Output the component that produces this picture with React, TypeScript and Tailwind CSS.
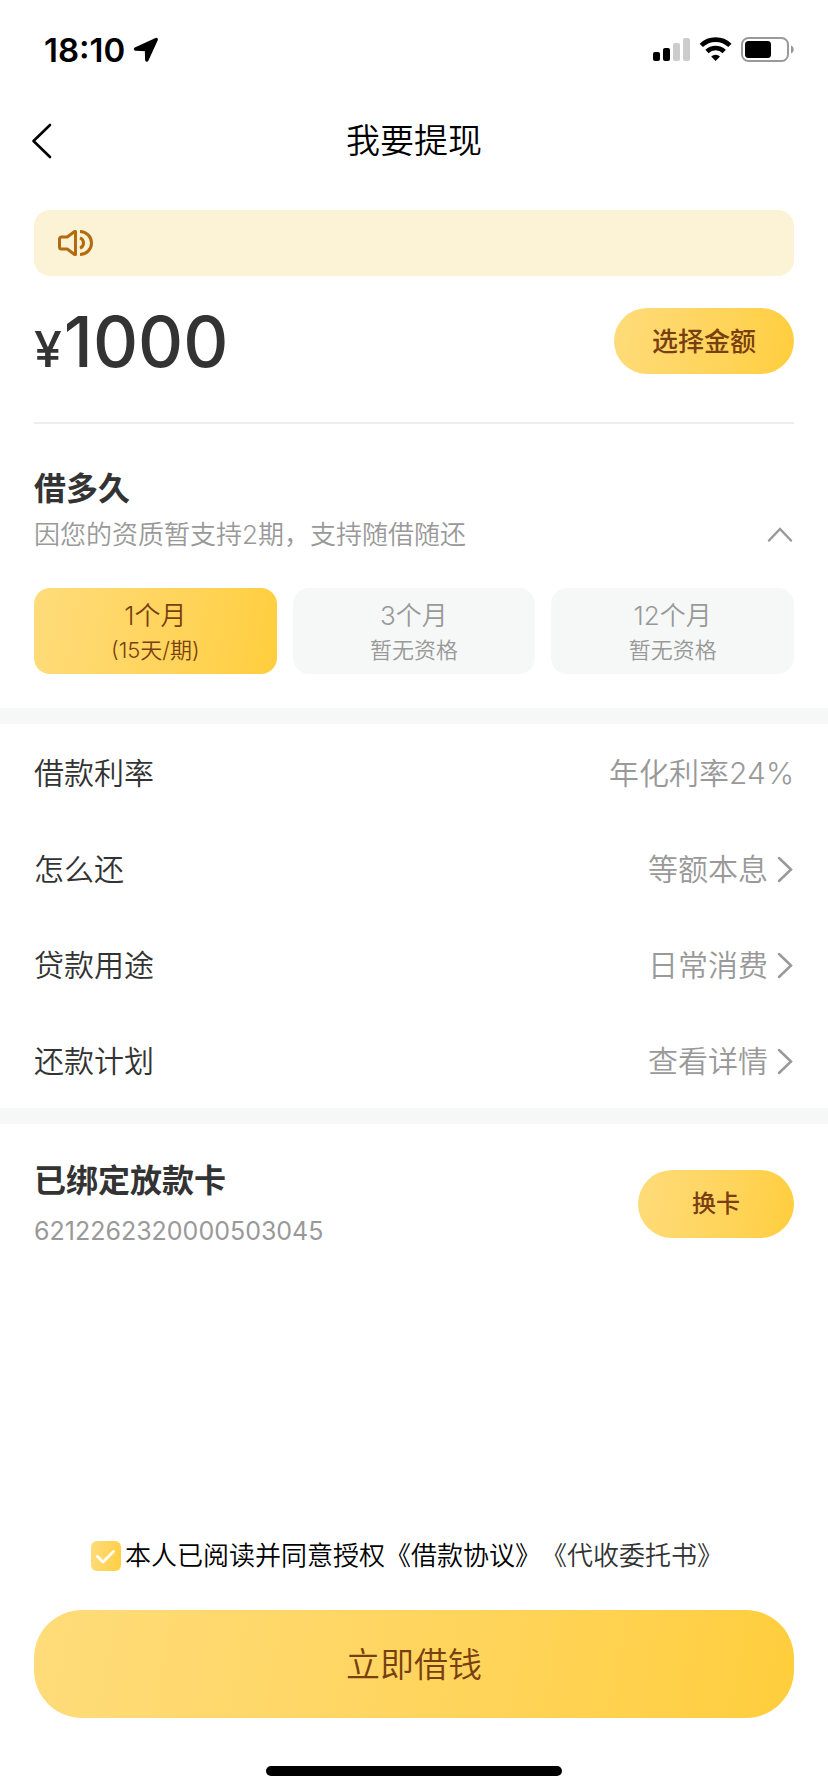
import { useState } from 'react'

type Term = { id: string; title: string; note: string; available: boolean }
type Detail = { label: string; value: string; link: boolean }

const TERMS: Term[] = [
  { id: '1', title: '1个月', note: '(15天/期)', available: true },
  { id: '3', title: '3个月', note: '暂无资格', available: false },
  { id: '12', title: '12个月', note: '暂无资格', available: false },
]

const DETAILS: Detail[] = [
  { label: '借款利率', value: '年化利率24%', link: false },
  { label: '怎么还', value: '等额本息', link: true },
  { label: '贷款用途', value: '日常消费', link: true },
  { label: '还款计划', value: '查看详情', link: true },
]

function StatusBar() {
  return (
    <div className="flex h-[100px] items-center justify-between pl-11 pr-[34px]">
      <div className="flex items-center gap-2">
        <span className="text-[33px] leading-10 font-semibold">18:10</span>
        <svg width="26" height="26" viewBox="0 0 26 26" aria-hidden="true">
          <path d="M2.5 12 23.2 2.5 13.8 23 13.5 12.6Z" stroke="#000" strokeWidth="3.4" strokeLinejoin="round" />
        </svg>
      </div>
      <svg width="142" height="26" viewBox="0 0 142 26" aria-hidden="true">
        <rect x="1" y="15" width="7" height="9" rx="2" />
        <rect x="11" y="11" width="7" height="13" rx="2" />
        <rect x="21" y="6" width="7" height="18" rx="2" fill="#ccc" />
        <rect x="31" y="1" width="7" height="23" rx="2" fill="#ccc" />
        <g fill="none" stroke="#000" strokeWidth="4.6">
          <path d="M49.3 8.4a20.5 20.5 0 0 1 28.6 0" />
          <path d="M55 14.5a12.5 12.5 0 0 1 17.2 0" />
        </g>
        <path d="M59.2 19.6a6.4 6.4 0 0 1 8.8 0L63.6 24Z" />
        <rect x="90" y="1" width="46" height="23" rx="6.5" fill="none" stroke="#999" strokeWidth="2" />
        <rect x="93" y="4" width="26" height="17" rx="3.5" />
        <path d="M139 8.5c3.6 1.2 3.6 6.8 0 8Z" fill="#999" />
      </svg>
    </div>
  )
}

function SpeakerIcon() {
  return (
    <svg width="36" height="28" viewBox="0 0 36 28" fill="none" stroke="#b36b10" strokeWidth="3" aria-hidden="true">
      <path d="M17.6 2.5h.9v23h-.9L10.2 20H4.5a2 2 0 0 1-2-2v-8a2 2 0 0 1 2-2h5.7Z" strokeLinejoin="round" />
      <path d="M23 2.5a11.5 11.5 0 0 1 0 23" />
      <path d="M23 8.8a5.6 5.6 0 0 1 0 10.4" />
    </svg>
  )
}

export default function App() {
  const [term, setTerm] = useState('1')
  const [agreed, setAgreed] = useState(true)

  return (
    <div className="flex min-h-screen flex-col bg-white font-['Inter','Noto_Sans_CJK_SC',sans-serif] font-[350] text-black">
      <StatusBar />

      <header className="grid h-20 grid-cols-[1fr_auto_1fr] items-center px-[30px] pt-0.5">
        <button type="button" aria-label="返回">
          <svg width="24" height="36" viewBox="0 0 24 36" fill="none" stroke="#000" strokeWidth="2.6" strokeLinecap="round" strokeLinejoin="round">
            <path d="M20 2 3.5 18 20 34" />
          </svg>
        </button>
        <h1 className="text-[34px] leading-12 font-[350]">我要提现</h1>
      </header>

      <main className="pt-[30px]">
        <div className="mx-[34px] flex h-[66px] items-center rounded-2xl bg-[#fcf2d6] pl-[23px]">
          <SpeakerIcon />
        </div>

        <section className="mx-[34px] mt-8 flex h-[116px] items-start justify-between border-b-2 border-[#eee]">
          <p className="text-[70px] leading-[68px] font-medium text-[#333]">
            <span className="mr-0.5 text-[50px]">¥</span>1000
          </p>
          <button
            type="button"
            className="h-[66px] w-[180px] rounded-full bg-linear-100 from-[#ffdc7a] to-[#ffce3c] text-[26px] font-medium text-[#7a3f10]"
          >
            选择金额
          </button>
        </section>

        <section className="px-[34px] pt-[41px] pb-[34px]">
          <h2 className="text-[32px] leading-12 font-bold text-[#333]">借多久</h2>
          <div className="flex h-11 items-center justify-between text-[#999]">
            <p className="text-[26px] leading-11">因您的资质暂支持2期，支持随借随还</p>
            <button type="button" aria-label="收起">
              <svg width="28" height="18" viewBox="0 0 28 18" fill="none" stroke="currentColor" strokeWidth="2.5" strokeLinecap="round">
                <path d="M3 14.5 14 3l11 11.5" />
              </svg>
            </button>
          </div>
          <div className="mt-[31px] grid grid-cols-3 gap-4">
            {TERMS.map(t => (
              <button
                key={t.id}
                type="button"
                disabled={!t.available}
                aria-pressed={term === t.id}
                onClick={() => setTerm(t.id)}
                className={`flex h-[86px] flex-col items-center justify-center rounded-2xl pt-0.5 ${
                  term === t.id
                    ? 'bg-linear-100 from-[#ffdc7a] to-[#ffce3c] text-[#7a3f10]'
                    : 'bg-[#f6f8f7] text-[#999]'
                }`}
              >
                <span className="text-[26px] leading-9">{t.title}</span>
                <span className="text-[22px] leading-8">{t.note}</span>
              </button>
            ))}
          </div>
        </section>

        <ul className="border-y-16 border-[#f6f8f7] px-[34px] text-[30px]">
          {DETAILS.map(d => (
            <li key={d.label} className="flex h-24 items-center justify-between pt-0.5">
              <span className="text-[#333]">{d.label}</span>
              {d.link ? (
                <button type="button" aria-label={`${d.label} ${d.value}`} className="flex items-center gap-2 text-[#999]">
                  {d.value}
                  <svg width="18" height="28" viewBox="0 0 18 28" fill="none" stroke="currentColor" strokeWidth="2.5" strokeLinecap="round">
                    <path d="M3 3l12 11.5L3 26" />
                  </svg>
                </button>
              ) : (
                <span className="text-[#999]">{d.value}</span>
              )}
            </li>
          ))}
        </ul>

        <section className="flex items-center justify-between px-[34px] pt-[33px]">
          <div>
            <h2 className="text-[32px] leading-12 font-bold text-[#333]">已绑定放款卡</h2>
            <p className="mt-1.5 text-[25px] leading-10 font-normal text-[#999]">6212262320000503045</p>
          </div>
          <button
            type="button"
            className="h-[68px] w-[156px] rounded-full bg-linear-100 from-[#ffdc7a] to-[#ffce3c] text-[24px] font-medium text-[#7a3f10]"
          >
            换卡
          </button>
        </section>
      </main>

      <footer className="mt-auto px-[34px] pb-4">
        <div className="flex items-center justify-center pr-3.5 text-[26px] leading-10">
          <label className="flex items-center gap-1">
            <span className="relative flex">
              <input
                type="checkbox"
                checked={agreed}
                onChange={e => setAgreed(e.target.checked)}
                className="size-[30px] appearance-none rounded-md border border-[#ffce3c] checked:border-0 checked:bg-linear-100 checked:from-[#ffdc7a] checked:to-[#ffce3c]"
              />
              {agreed && (
                <svg viewBox="0 0 30 30" className="pointer-events-none absolute inset-0" fill="none" stroke="#fff" strokeWidth="2.8" strokeLinecap="round" strokeLinejoin="round" aria-hidden="true">
                  <path d="M6.5 15.5 12 21 22.5 10.5" />
                </svg>
              )}
            </span>
            本人已阅读并同意授权
          </label>
          <a href="#loan">《借款协议》</a>
          <a href="#collection" className="text-[#333]">《代收委托书》</a>
        </div>
        <button
          type="button"
          className="mt-[34px] h-[108px] w-full rounded-[48px] bg-linear-100 from-[#ffdc7a] to-[#ffce3c] text-[34px] text-[#7a3f10]"
        >
          立即借钱
        </button>
        <div className="mx-auto mt-12 h-2.5 w-[296px] rounded-full bg-black" />
      </footer>
    </div>
  )
}
